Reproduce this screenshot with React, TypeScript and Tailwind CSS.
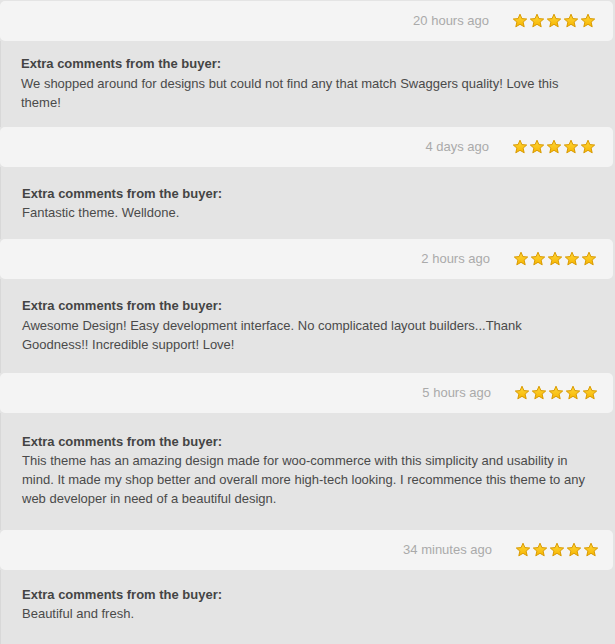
import React from "react";

const Star = () => (
  <svg width="16" height="16" viewBox="0 0 16 16">
    <defs>
      <linearGradient id="sg" x1="0" y1="0" x2="0" y2="1">
        <stop offset="0" stopColor="#ffd83a" />
        <stop offset="1" stopColor="#f7b500" />
      </linearGradient>
    </defs>
    <path
      d="M8 1.2 L9.9 5.6 L14.7 6 L11.1 9.1 L12.2 13.8 L8 11.3 L3.8 13.8 L4.9 9.1 L1.3 6 L6.1 5.6 Z"
      fill="url(#sg)"
      stroke="#d99a00"
      strokeWidth="1"
      strokeLinejoin="round"
    />
  </svg>
);

type Review = {
  ago: string;
  text: string;
  box: string;
  gap: string;
  hdr: string;
};

const reviews: Review[] = [
  {
    ago: "20 hours ago",
    text: "We shopped around for designs but could not find any that match Swaggers quality! Love this theme!",
    box: "pt-[14px] pb-[15px] pl-[20px]",
    gap: "mt-[1px]",
    hdr: "pr-[17px]",
  },
  {
    ago: "4 days ago",
    text: "Fantastic theme. Welldone.",
    box: "pt-[18px] pb-[17px] pl-[21px]",
    gap: "mt-[0px]",
    hdr: "pr-[17px]",
  },
  {
    ago: "2 hours ago",
    text: "Awesome Design! Easy development interface. No complicated layout builders...Thank Goodness!! Incredible support! Love!",
    box: "pt-[18px] pb-[19px] pl-[21px]",
    gap: "mt-[1px]",
    hdr: "pr-[16px]",
  },
  {
    ago: "5 hours ago",
    text: "This theme has an amazing design made for woo-commerce with this simplicity and usability in mind. It made my shop better and overall more high-tech looking. I recommence this theme to any web developer in need of a beautiful design.",
    box: "pt-[20px] pb-[22px] pl-[21px]",
    gap: "mt-[0px]",
    hdr: "pr-[15px]",
  },
  {
    ago: "34 minutes ago",
    text: "Beautiful and fresh.",
    box: "pt-[16px] pb-[30px] pl-[21px]",
    gap: "mt-[0px]",
    hdr: "pr-[14px]",
  },
];

export default function App() {
  return (
    <div
      className="w-[615px] h-[644px] overflow-hidden bg-[#e4e4e4] pt-[1px]"
      style={{ fontFamily: '"Liberation Sans", Arial, sans-serif' }}
    >
      {reviews.map((r, i) => (
        <div key={i} className="flex flex-col">
          <div
            className={`h-[40px] mr-[2px] bg-[#f4f4f4] rounded-[5px] flex items-center justify-end ${r.hdr}`}
          >
            <span className="text-[13px] text-[#aaaaaa] mr-[23px]">{r.ago}</span>
            <div className="flex gap-[1px]">
              <Star />
              <Star />
              <Star />
              <Star />
              <Star />
            </div>
          </div>
          <div
            className={`${r.box} pr-[25px] text-[13px] text-[#444444] border-l border-[#d8d8d8]`}
          >
            <div className="font-bold leading-[18px] text-[#444444]">
              Extra comments from the buyer:
            </div>
            <div className={`leading-[19px] text-[#4a4a4a] ${r.gap}`}>{r.text}</div>
          </div>
        </div>
      ))}
    </div>
  );
}
